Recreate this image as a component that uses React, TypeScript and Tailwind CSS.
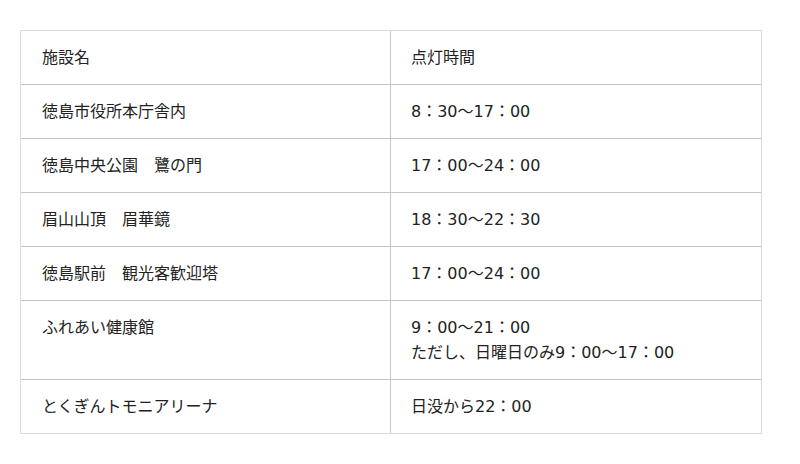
const rows: { name: string; time: string[] }[] = [
  { name: "徳島市役所本庁舎内", time: ["8：30〜17：00"] },
  { name: "徳島中央公園　鷺の門", time: ["17：00〜24：00"] },
  { name: "眉山山頂　眉華鏡", time: ["18：30〜22：30"] },
  { name: "徳島駅前　観光客歓迎塔", time: ["17：00〜24：00"] },
  { name: "ふれあい健康館", time: ["9：00〜21：00", "ただし、日曜日のみ9：00〜17：00"] },
  { name: "とくぎんトモニアリーナ", time: ["日没から22：00"] },
];

export default function App() {
  return (
    <div
      className="min-h-[464px] bg-white pt-[30px] pl-[20px] text-[16px] leading-[25px] text-[#222]"
      style={{ fontFamily: '"DejaVu Sans", "Noto Sans CJK JP", sans-serif' }}
    >
      <div className="w-[742px] border border-[#dcdcdc]">
        <div className="grid grid-cols-[370px_1fr]">
          <div className="border-r border-b border-[#c4c4c4] px-[21px] py-[14px]">施設名</div>
          <div className="border-b border-[#c4c4c4] px-[20px] py-[14px]">点灯時間</div>
          {rows.map((r, i) => {
            const last = i === rows.length - 1;
            return (
              <div key={r.name} className="contents">
                <div
                  className={`border-r border-[#c4c4c4] px-[21px] py-[14px] ${last ? "" : "border-b"}`}
                >
                  {r.name}
                </div>
                <div className={`border-[#c4c4c4] px-[20px] py-[14px] ${last ? "" : "border-b"}`}>
                  {r.time.map((t) => (
                    <div key={t}>{t}</div>
                  ))}
                </div>
              </div>
            );
          })}
        </div>
      </div>
    </div>
  );
}
